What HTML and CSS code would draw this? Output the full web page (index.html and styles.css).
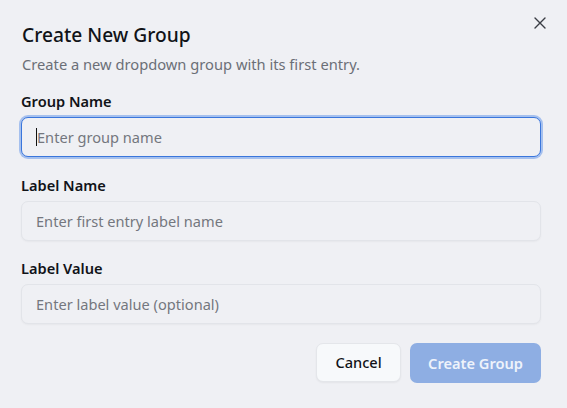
FILE: index.html
```html
<!DOCTYPE html>
<html lang="en">
<head>
<meta charset="utf-8">
<link rel="stylesheet" href="styles.css">
</head>
<body>
<div class="dialog">
  <button class="close" aria-label="Close">
    <svg width="12" height="12" viewBox="0 0 12 12"><path d="M1 1L11 11M11 1L1 11" stroke="#3a3d44" stroke-width="1.4" stroke-linecap="round"/></svg>
  </button>
  <header class="head">
    <h2 class="title">Create New Group</h2>
    <p class="desc">Create a new dropdown group with its first entry.</p>
  </header>
  <form class="form">
    <div class="field">
      <label class="label">Group Name</label>
      <div class="input focus"><span class="caret"></span><span class="ph">Enter group name</span></div>
    </div>
    <div class="field">
      <label class="label">Label Name</label>
      <div class="input"><span class="ph">Enter first entry label name</span></div>
    </div>
    <div class="field">
      <label class="label">Label Value</label>
      <div class="input"><span class="ph">Enter label value (optional)</span></div>
    </div>
    <div class="actions">
      <button type="button" class="btn cancel">Cancel</button>
      <button type="button" class="btn primary">Create Group</button>
    </div>
  </form>
</div>
</body>
</html>
```

FILE: styles.css
```css
* { box-sizing: border-box; }
html, body { margin: 0; padding: 0; }
body {
  width: 567px;
  height: 408px;
  background: #eff0f4;
  font-family: "Noto Sans", "Open Sans", sans-serif;
  color: #111318;
  overflow: hidden;
}
.dialog {
  position: relative;
  padding: 21px 26px 0 21px;
}
.close {
  position: absolute;
  top: 16px;
  right: 20px;
  width: 14px;
  height: 14px;
  padding: 1px;
  border: 0;
  background: none;
  display: flex;
  align-items: center;
  justify-content: center;
}
.head { margin-bottom: 17px; }
.title {
  margin: 0;
  font-size: 19.2px;
  line-height: 28px;
  font-weight: 500;
  padding-left: 1px;
}
.desc {
  margin: 5px 0 0;
  font-size: 14.7px;
  line-height: 20px;
  color: #6b6f77;
  padding-left: 1px;
}
.form { display: flex; flex-direction: column; gap: 17.5px; }
.field { display: flex; flex-direction: column; gap: 6px; }
.label {
  font-size: 14.6px;
  line-height: 20px;
  font-weight: 600;
}
.input {
  height: 40px;
  border: 1px solid #e2e4e9;
  border-radius: 7px;
  background: #eff0f4;
  box-shadow: 0 1px 2px rgba(0,0,0,0.04);
  display: flex;
  align-items: center;
  padding: 0 14px;
  font-size: 14.6px;
  color: #74777e;
}
.input.focus {
  border: 1.5px solid #3a76dc;
  box-shadow: 0 0 0 2px #a5c0ee;
}
.caret {
  width: 1px;
  height: 18px;
  background: #111;
}
.actions {
  display: flex;
  justify-content: flex-end;
  gap: 9px;
  margin-top: 1px;
}
.btn {
  font-family: inherit;
  font-size: 14.6px;
  font-weight: 500;
  border-radius: 7px;
  height: 39px;
  padding: 0 10px;
}
.cancel {
  background: #f7f9fb;
  border: 1px solid #e4e6ea;
  color: #111318;
  box-shadow: 0 1px 2px rgba(0,0,0,0.05);
  width: 85px;
}
.primary {
  background: #8eaee3;
  border: 0;
  color: #eef3fb;
  font-weight: 600;
  width: 131px;
  height: 40px;
}
```
